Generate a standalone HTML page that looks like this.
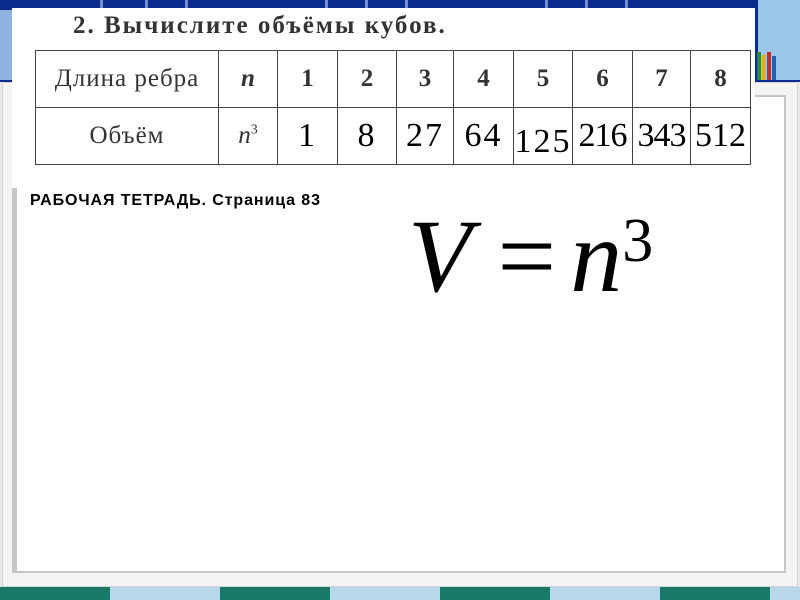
<!DOCTYPE html>
<html><head><meta charset="utf-8"><style>
*{margin:0;padding:0;box-sizing:border-box}
body{width:800px;height:600px;overflow:hidden;position:relative;background:#e9e9e9;font-family:"Liberation Serif",serif}
.abs{position:absolute}
#top{left:0;top:0;width:800px;height:82px;background:#0b2c8c}
.win{position:absolute;top:0;height:82px;width:3px;background:#6f8fd0}
#bot{left:0;top:587px;width:800px;height:13px;background:linear-gradient(90deg,#1a7a6a 0 110px,#b9d7ea 110px 220px,#1a7a6a 220px 330px,#b9d7ea 330px 440px,#1a7a6a 440px 550px,#b9d7ea 550px 660px,#1a7a6a 660px 770px,#b9d7ea 770px)}
#panel{left:2px;top:82px;width:796px;height:505px;background:#f4f4f4;border:1px solid #d4d4d4}
#inner{left:14px;top:95px;width:772px;height:478px;background:#fff;border:2px solid #c6c6c6}
#sheet{left:12px;top:8px;width:743px;height:180px;background:#fff}
h2{position:absolute;left:73px;top:12px;font-size:25px;font-weight:bold;color:#333;letter-spacing:2px;white-space:nowrap}
table{position:absolute;left:35px;top:50px;border-collapse:collapse;color:#333}
td{border:1.5px solid #444;text-align:center;font-size:25px;height:57px}
tr:first-child td{height:57px;font-weight:bold}
.hw{font-weight:normal;color:#000;font-size:34px;letter-spacing:2px}
#lbl{left:30px;top:192px;font-family:"Liberation Sans",sans-serif;font-weight:bold;font-size:16px;color:#000;white-space:nowrap;letter-spacing:0.9px}
#f{left:408px;top:197px;font-size:104px;color:#000;white-space:nowrap}
</style></head><body>
<div id="top" class="abs">
<div class="win" style="left:100px"></div><div class="win" style="left:145px"></div><div class="win" style="left:185px"></div><div class="win" style="left:325px"></div><div class="win" style="left:365px"></div><div class="win" style="left:405px"></div><div class="win" style="left:545px"></div><div class="win" style="left:585px"></div><div class="win" style="left:625px"></div>
<div class="abs" style="left:0;top:10px;width:12px;height:70px;background:#8fb3e0"></div>
<div class="abs" style="left:758px;top:0;width:42px;height:80px;background:#9cc6ea"></div>
<div class="abs" style="left:757px;top:52px;width:4px;height:28px;background:#2a8a3a"></div>
<div class="abs" style="left:762px;top:55px;width:4px;height:25px;background:#e0b020"></div>
<div class="abs" style="left:767px;top:52px;width:4px;height:28px;background:#c03030"></div>
<div class="abs" style="left:772px;top:56px;width:4px;height:24px;background:#2060b0"></div>
</div>
<div id="bot" class="abs"></div>
<div id="panel" class="abs"></div>
<div id="inner" class="abs"></div>
<div class="abs" style="left:12px;top:188px;width:5px;height:385px;background:#c6c6c6"></div>
<div id="sheet" class="abs"></div>
<h2>2. Вычислите объёмы кубов.</h2>
<table>
<tr><td style="width:183px;font-weight:normal;letter-spacing:1px">Длина ребра</td><td style="width:59px;font-style:italic">n</td><td style="width:60px">1</td><td style="width:59px">2</td><td style="width:57px">3</td><td style="width:60px">4</td><td style="width:59px">5</td><td style="width:60px">6</td><td style="width:58px">7</td><td style="width:60px">8</td></tr>
<tr><td style="font-weight:normal;letter-spacing:1px">Объём</td><td style="font-style:italic">n<sup style="font-size:14px;font-style:normal">3</sup></td><td class="hw">1</td><td class="hw">8</td><td class="hw">27</td><td class="hw">64</td><td class="hw" style="padding-top:12px">125</td><td class="hw" style="letter-spacing:-1px">216</td><td class="hw" style="letter-spacing:-1px">343</td><td class="hw" style="letter-spacing:0">512</td></tr>
</table>
<div id="lbl" class="abs">РАБОЧАЯ ТЕТРАДЬ. Страница 83</div>
<div id="f" class="abs"><i>V</i> =<span style="margin-left:14px"></span><i>n</i><span style="font-size:62px;position:relative;top:-30px">3</span></div>
</body></html>
